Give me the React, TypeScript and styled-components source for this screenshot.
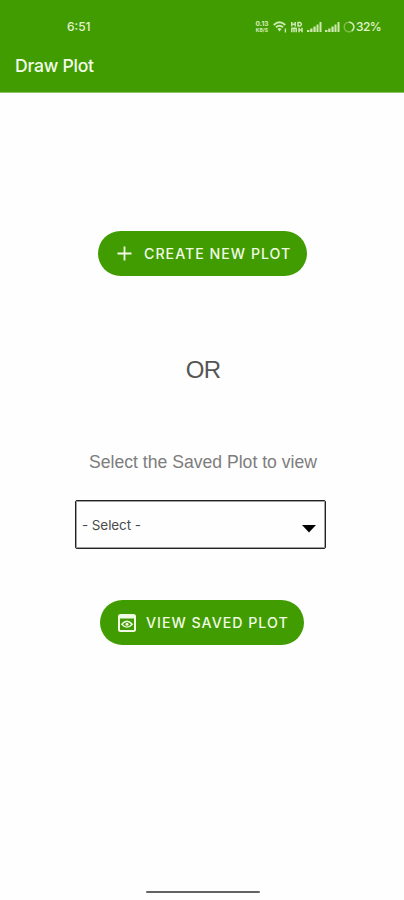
import React from "react";
import styled, { createGlobalStyle } from "styled-components";

const green = "#409c00";

const GlobalStyle = createGlobalStyle`
  * { box-sizing: border-box; }
  body { margin: 0; background: #fefefe; font-family: Inter, "Liberation Sans", sans-serif; }
`;

const Screen = styled.div`
  width: 404px;
  height: 900px;
  display: flex;
  flex-direction: column;
  align-items: center;
  overflow: hidden;
  background: #fefefe;
`;

const Header = styled.header`
  width: 100%;
  height: 93px;
  flex: none;
  background: ${green};
  border-bottom: 1px solid #8fc36a;
  color: #f4fbe9;
`;

const StatusBar = styled.div`
  height: 40px;
  padding: 13px 24px 0 67px;
  display: flex;
  justify-content: space-between;
  align-items: flex-start;
`;

const Clock = styled.span`
  font-size: 12px;
  line-height: 28px;
  font-weight: 500;
  color: #e2f3cd;
`;

const StatusIcons = styled.div`
  display: flex;
  align-items: center;
  height: 27px;
  color: #cde8b0;
`;

const Speed = styled.div`
  width: 14px;
  margin-right: 4px;
  display: flex;
  flex-direction: column;
  align-items: center;
  font-weight: 800;
  white-space: nowrap;
`;

const SpeedLine = styled.span<{ $size: number }>`
  font-size: ${(p) => p.$size}px;
  line-height: 6px;
`;

const Glyph = styled.svg<{ $gap?: number }>`
  display: block;
  flex: none;
  margin-right: ${(p) => p.$gap ?? 0}px;
`;

const Battery = styled.span`
  width: 24px;
  font-size: 12px;
  font-weight: 500;
  letter-spacing: -0.6px;
  line-height: 28px;
  color: #e2f3cd;
`;

const Title = styled.h1`
  margin: 0;
  padding-left: 15px;
  font-size: 17.6px;
  line-height: 52px;
  font-weight: 500;
  letter-spacing: -0.25px;
`;

const Main = styled.main`
  flex: 1;
  display: flex;
  flex-direction: column;
  align-items: center;
  padding-top: 138px;
`;

const PillButton = styled.button<{ $width: number; $gap: number; $shift: number }>`
  width: ${(p) => p.$width}px;
  height: 45px;
  margin: 0 0 0 ${(p) => p.$shift}px;
  padding: 0 0 0 18px;
  display: flex;
  align-items: center;
  gap: ${(p) => p.$gap}px;
  border: 0;
  border-radius: 23px;
  background: ${green};
  color: #f1fae5;
  font-family: inherit;
  font-size: 14.2px;
  font-weight: 500;
  letter-spacing: 1px;
  white-space: nowrap;
`;

const Divider = styled.p`
  margin: 76px 0 0 2px;
  font-family: "Liberation Sans", Arial, sans-serif;
  font-size: 24px;
  line-height: 36px;
  letter-spacing: -0.8px;
  color: #555;
`;

const Prompt = styled.p`
  margin: 62px 0 0 2px;
  font-family: "Liberation Sans", Arial, sans-serif;
  font-size: 17.6px;
  line-height: 24px;
  color: #7d7d7d;
`;

const SelectBox = styled.div`
  width: 251px;
  height: 49px;
  margin: 26px 3px 51px 0;
  padding: 0 9px 0 6px;
  display: flex;
  align-items: center;
  justify-content: space-between;
  border: 1px solid #222;
  border-radius: 2px;
  box-shadow: inset 0 0 0 1px #a0a0a0;
  color: #4b4b4b;
  font-size: 13.5px;
  letter-spacing: -0.1px;
`;

const Caret = styled.svg`
  display: block;
  margin-top: 9px;
`;

const HomeBar = styled.div`
  width: 114px;
  height: 2px;
  flex: none;
  margin: 0 0 7px 1px;
  border-radius: 1px;
  background: #636363;
`;

const Signal = ({ gap }: { gap: number }) => (
  <Glyph $gap={gap} width="15" height="12" viewBox="0 0 15 12" fill="currentColor">
    <path d="M0 9h2.4v2H0zM3.2 7.5h2.3V11H3.2zM6.4 5.5h2.3V11H6.4zM9.5 3.5h2V11h-2zM12.5 1h2v10h-2z" />
  </Glyph>
);

export default function App() {
  return (
    <Screen>
      <GlobalStyle />
      <Header>
        <StatusBar>
          <Clock>6:51</Clock>
          <StatusIcons>
            <Speed>
              <SpeedLine $size={6.5}>0.13</SpeedLine>
              <SpeedLine $size={5}>KB/S</SpeedLine>
            </Speed>
            <Glyph $gap={3} width="15" height="12" viewBox="0 0 15 12" fill="none" stroke="currentColor" strokeWidth="1.9">
              <path d="M.8 4Q6.5-1.6 12.2 4M3 6.3q3.5-3.3 7 0" />
              <path d="M4.5 8q2-1.8 4 0l-2 2.4z" fill="currentColor" stroke="none" />
              <path d="M12.4 7.5v4" strokeWidth="1.4" />
            </Glyph>
            <Glyph $gap={4} width="12" height="12" viewBox="0 0 12 12" fill="none" stroke="currentColor" strokeWidth="1.5">
              <path d="M.8 1v4.4M4.2 1v4.4M.8 3.2h3.4M7 1.4v3.6h2q3-1.8 0-3.6zM.8 6.8v4.4M3 6.8v4.4M5.2 6.8v4.4M8 6.8v4.4M11 6.8v4.4M.8 7.2h4.4M8 9h3" />
            </Glyph>
            <Signal gap={3} />
            <Signal gap={3} />
            <Glyph $gap={1} width="12" height="12" viewBox="0 0 12 12" fill="none" strokeWidth="1.5">
              <circle cx="6" cy="6" r="4.8" stroke="#7fbd4c" />
              <path d="M6 1.2a4.8 4.8 0 0 1 2.8 8.7" stroke="#cde8b0" />
            </Glyph>
            <Battery>32%</Battery>
          </StatusIcons>
        </StatusBar>
        <Title>Draw Plot</Title>
      </Header>
      <Main>
        <PillButton $width={209} $gap={11} $shift={1}>
          <svg width="17" height="17" viewBox="0 0 17 17" fill="none" stroke="currentColor" strokeWidth="1.8">
            <path d="M8.5 1.5v14M1.5 8.5h14" />
          </svg>
          CREATE NEW PLOT
        </PillButton>
        <Divider>OR</Divider>
        <Prompt>Select the Saved Plot to view</Prompt>
        <SelectBox>
          <span>- Select -</span>
          <Caret width="14" height="8" viewBox="0 0 14 8" fill="#000">
            <path d="M0 0h14L7 7.5z" />
          </Caret>
        </SelectBox>
        <PillButton $width={204} $gap={10} $shift={0}>
          <svg width="18" height="18" viewBox="0 0 18 18" fill="none" stroke="currentColor">
            <rect x="1" y="1" width="16" height="16" rx="1.5" strokeWidth="2" />
            <path d="M1 3h16" strokeWidth="3" />
            <path d="M3.8 10.2q5.2-5.8 10.4 0q-5.2 5.8-10.4 0z" strokeWidth="1.4" />
            <circle cx="9" cy="10.2" r="1.5" fill="currentColor" stroke="none" />
          </svg>
          VIEW SAVED PLOT
        </PillButton>
      </Main>
      <HomeBar />
    </Screen>
  );
}
